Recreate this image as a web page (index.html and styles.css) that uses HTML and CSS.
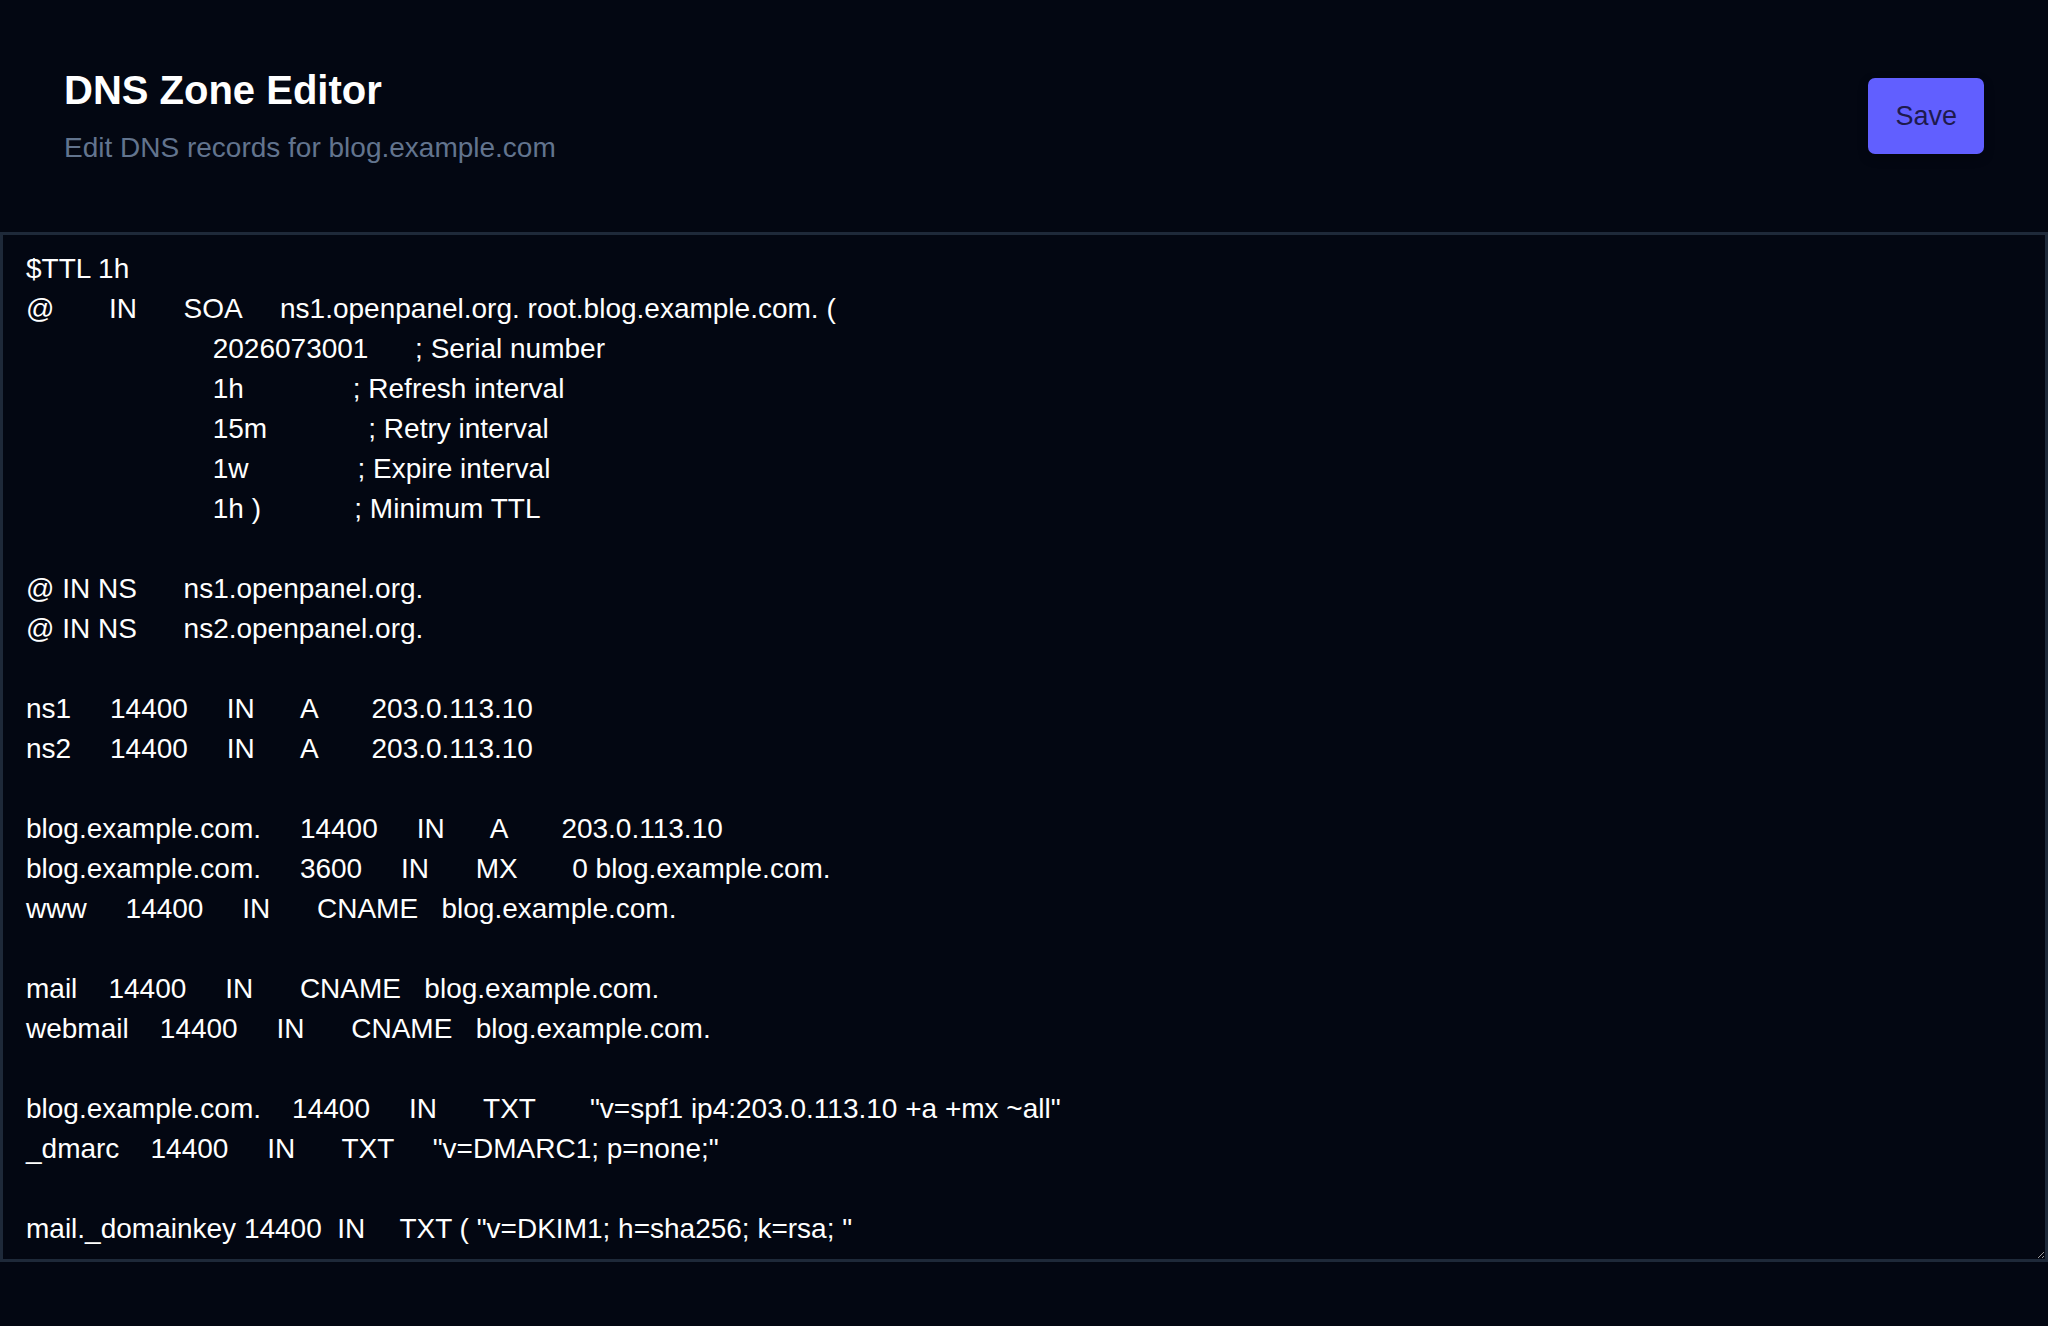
FILE: index.html
```html
<!DOCTYPE html>
<html>
  <head>
    <title>DNS Zone Editor</title>
    <link rel="stylesheet" href="styles.css">
  </head>
  <body>
    <div class="header">
      <div class="heading">
        <h1>DNS Zone Editor</h1>
        <p class="subtitle">Edit DNS records for blog.example.com</p>
      </div>
      <button type="button" id="save" class="save">Save</button>
    </div>
    <textarea id="zone" class="zone" spellcheck="false">
$TTL 1h
@       IN      SOA     ns1.openpanel.org. root.blog.example.com. (
                        2026073001      ; Serial number
                        1h              ; Refresh interval
                        15m             ; Retry interval
                        1w              ; Expire interval
                        1h )            ; Minimum TTL

@ IN NS      ns1.openpanel.org.
@ IN NS      ns2.openpanel.org.

ns1     14400     IN      A       203.0.113.10
ns2     14400     IN      A       203.0.113.10

blog.example.com.     14400     IN      A       203.0.113.10
blog.example.com.     3600     IN      MX       0 blog.example.com.
www     14400     IN      CNAME   blog.example.com.

mail    14400     IN      CNAME   blog.example.com.
webmail    14400     IN      CNAME   blog.example.com.

blog.example.com.    14400     IN      TXT       "v=spf1 ip4:203.0.113.10 +a +mx ~all"
_dmarc    14400     IN      TXT     "v=DMARC1; p=none;"

mail._domainkey 14400	IN	TXT ( "v=DKIM1; h=sha256; k=rsa; "</textarea>
    <script>
      var zone = document.getElementById('zone')
      var save_button = document.getElementById('save')
      save_button.onclick = function (event) {
        event.preventDefault()
        save_button.disabled = 'disabled'
        save_button.innerText = 'Saving...'
      }
      zone.onkeydown = function (event) {
        if (event.key == 'Tab') {
          event.preventDefault()
          let s = zone.selectionStart
          zone.value = zone.value.substring(0, s) + '\t' + zone.value.substring(zone.selectionEnd)
          zone.selectionStart = zone.selectionEnd = s + 1
        }
      }
    </script>
  </body>
</html>
```

FILE: styles.css
```css
* {
  box-sizing: border-box;
}
body {
  margin: 0;
  background: #030712;
  color: #fff;
  font-family: 'Liberation Sans', Arial, sans-serif;
}
.header {
  display: flex;
  justify-content: space-between;
  align-items: center;
  padding: 62px 64px 64px;
}
h1 {
  margin: 0;
  font-size: 40px;
  line-height: 56px;
  font-weight: 700;
}
.subtitle {
  margin: 10px 0 0;
  font-size: 28px;
  line-height: 40px;
  color: #62748e;
}
.save {
  height: 76px;
  margin-top: 2px;
  padding: 0 27px;
  border: 0;
  border-radius: 7px;
  background-color: #615fff;
  box-shadow: 0 4px 12px -2px rgba(0, 0, 0, 0.4);
  color: #1e1a4d;
  font-family: inherit;
  font-size: 27px;
  cursor: pointer;
}
.save[disabled] {
  opacity: 0.6;
  cursor: not-allowed;
}
.zone {
  display: block;
  width: 100%;
  height: 1030px;
  margin: 0;
  padding: 14px 23px;
  border: 3px solid #1e2939;
  background: #030712;
  color: #fff;
  color-scheme: dark;
  font-family: 'Liberation Sans', Arial, sans-serif;
  font-size: 28px;
  line-height: 40px;
  tab-size: 8;
  outline: none;
  overflow: hidden;
  resize: vertical;
}
```
